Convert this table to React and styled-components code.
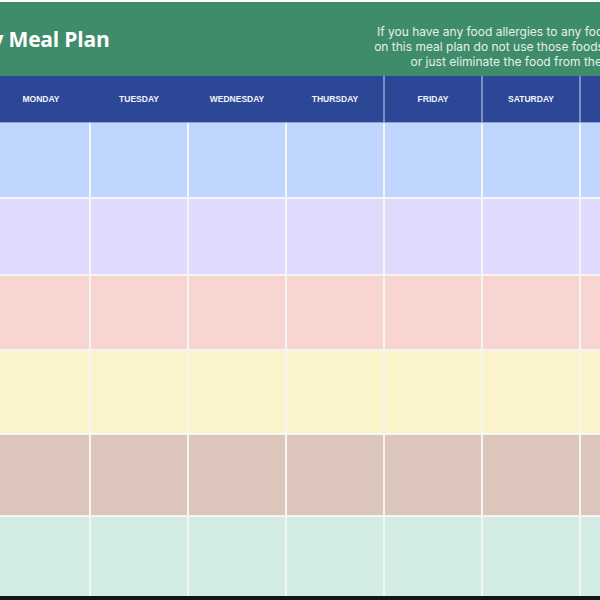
import React from 'react';
import styled, { createGlobalStyle, css } from 'styled-components';

const GlobalStyle = createGlobalStyle`
  html, body {
    margin: 0;
    padding: 0;
    background: #ffffff;
  }
  body {
    width: 600px;
    height: 600px;
    overflow: hidden;
  }
`;

const DAYS = ['Monday', 'Tuesday', 'Wednesday', 'Thursday', 'Friday', 'Saturday', 'Sunday'];

const MEALS = [
  { label: 'Breakfast', color: '#c0d5fd', height: 74 },
  { label: 'Snack', color: '#e0dafe', height: 75 },
  { label: 'Lunch', color: '#f8d5d1', height: 73 },
  { label: 'Snack', color: '#fcf5cc', height: 82 },
  { label: 'Dinner', color: '#dcc6bb', height: 80 },
  { label: 'Notes', color: '#d3ece5', height: 79 },
];

// label column + 6 fixed day columns + wider sunday column
const COLUMNS = '110px repeat(6, 96px) 1fr';

const Sheet = styled.div`
  width: 840px;
  margin: 2px 0 0 -119px;
  border-bottom: 4px solid #151515;
`;

const Banner = styled.header`
  display: flex;
  align-items: center;
  justify-content: space-between;
  height: 74px;
  padding: 0 14px 0 47px;
  background: #3e8c69;
`;

const Title = styled.h1`
  margin: 0;
  font-family: 'Open Sans', 'Liberation Sans', sans-serif;
  font-size: 21px;
  font-weight: 700;
  letter-spacing: -0.2px;
  color: #ffffff;
`;

const Note = styled.p`
  align-self: flex-start;
  width: 340px;
  margin: 22px 0 0;
  font-family: Inter, 'Liberation Sans', sans-serif;
  font-size: 12px;
  line-height: 15px;
  text-align: center;
  white-space: nowrap;
  color: #e6f0ea;
`;

const DayBar = styled.div`
  display: grid;
  grid-template-columns: ${COLUMNS};
  column-gap: 2px;
  height: 46px;
  background: #2c4795;
  border-bottom: 1px solid #8ea3d8;
`;

const DayCell = styled.div`
  display: flex;
  align-items: center;
  justify-content: center;
  font-family: 'Liberation Sans', Arial, sans-serif;
  font-size: 8.5px;
  font-weight: 700;
  text-transform: uppercase;
  color: #f2f4fb;
  ${(p) =>
    p.$divider &&
    css`
      box-shadow: -2px 0 0 #7d8fc6;
    `}
`;

const Grid = styled.div`
  display: grid;
  grid-template-columns: ${COLUMNS};
  grid-template-rows: ${MEALS.map((m) => `${m.height}px`).join(' ')};
  gap: 2px;
  background: #f5f5f3;
`;

const Cell = styled.div`
  background: ${(p) => p.$color};
`;

const MealLabel = styled(Cell)`
  display: flex;
  align-items: center;
  justify-content: center;
  font-family: 'Liberation Sans', Arial, sans-serif;
  font-size: 10px;
  font-weight: 700;
  text-transform: uppercase;
  color: #2c4795;
`;

export default function App() {
  return (
    <>
      <GlobalStyle />
      <Sheet>
        <Banner>
          <Title>Weekly Meal Plan</Title>
          <Note>
            If you have any food allergies to any foods that are listed
            <br />
            on this meal plan do not use those foods. Substitute them
            <br />
            or just eliminate the food from the meal plan.
          </Note>
        </Banner>
        <DayBar>
          <DayCell />
          {DAYS.map((day, i) => (
            <DayCell key={day} $divider={i >= 4}>
              {day}
            </DayCell>
          ))}
        </DayBar>
        <Grid>
          {MEALS.map((meal, r) => (
            <React.Fragment key={r}>
              <MealLabel $color={meal.color}>{meal.label}</MealLabel>
              {DAYS.map((day) => (
                <Cell key={day} $color={meal.color} />
              ))}
            </React.Fragment>
          ))}
        </Grid>
      </Sheet>
    </>
  );
}
